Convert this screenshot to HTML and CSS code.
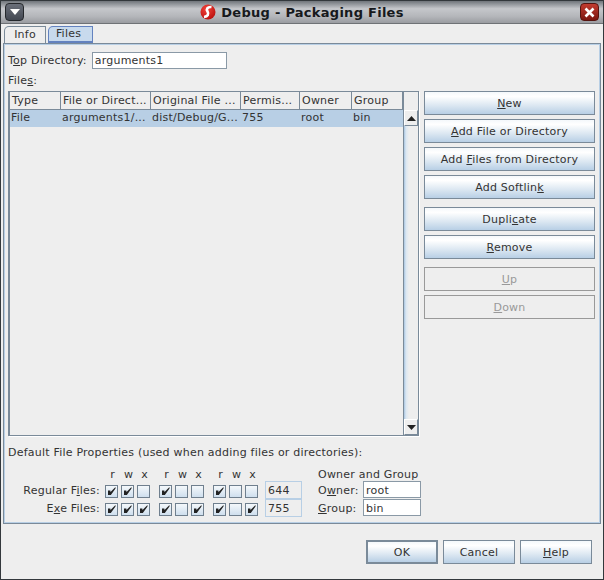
FILE: index.html
```html
<!DOCTYPE html>
<html>
	<head>
		<meta charset="utf-8">
		<title>Debug - Packaging Files</title>
		<link rel="stylesheet" href="styles.css">
	</head>
	<body>
		<div class="ventana">

			<div class="tituloBarra">
				<div class="botonMenu">
					<svg width="10" height="6" viewBox="0 0 10 6"><path d="M0 0H10L5 6Z" fill="#fff"/></svg>
				</div>
				<div class="titulo">
					<svg class="logo" width="16" height="16" viewBox="0 0 16 16">
						<defs>
							<radialGradient id="brilloLogo" cx="40%" cy="30%" r="75%">
								<stop offset="0" stop-color="#f4443c"/>
								<stop offset="1" stop-color="#b80f0c"/>
							</radialGradient>
						</defs>
						<circle cx="8" cy="8" r="7.5" fill="url(#brilloLogo)"/>
						<path d="M11.5 3C7.5 2.5 6 5 7.5 7.5C9 10 8 12.5 4 13" stroke="#fff" stroke-width="2.6" fill="none"/>
					</svg>
					<span>Debug - Packaging Files</span>
				</div>
				<div class="botonCerrar">
					<svg width="11" height="11" viewBox="0 0 11 11"><path d="M1.5 1.5L9.5 9.5M9.5 1.5L1.5 9.5" stroke="#fff" stroke-width="2.6"/></svg>
				</div>
			</div>

			<div class="cuerpo">
				<div class="tabs">
					<div class="tab">Info</div>
					<div class="tab tabActiva">Files</div>
				</div>

				<div class="panel">
					<div class="filaDirectorio">
						<label>T<u>o</u>p Directory:</label>
						<div class="campo campoDirectorio">arguments1</div>
					</div>
					<div class="etiquetaFiles">File<u>s</u>:</div>

					<div class="zonaTabla">
						<div class="tabla">
							<div class="tablaContenido">
								<div class="filaTabla cabecera">
									<div class="celda colTipo">Type</div>
									<div class="celda colArchivo">File or Direct...</div>
									<div class="celda colOriginal">Original File ...</div>
									<div class="celda colPermisos">Permis...</div>
									<div class="celda colOwner">Owner</div>
									<div class="celda colGrupo">Group</div>
								</div>
								<div class="filaTabla seleccionada">
									<div class="celda colTipo">File</div>
									<div class="celda colArchivo">arguments1/...</div>
									<div class="celda colOriginal">dist/Debug/G...</div>
									<div class="celda colPermisos">755</div>
									<div class="celda colOwner">root</div>
									<div class="celda colGrupo">bin</div>
								</div>
							</div>
							<div class="scroll">
								<div class="scrollBoton">
									<svg width="9" height="5" viewBox="0 0 9 5"><path d="M4.5 0L9 5H0Z" fill="#222"/></svg>
								</div>
								<div class="scrollPista"></div>
								<div class="scrollBoton">
									<svg width="9" height="5" viewBox="0 0 9 5"><path d="M0 0H9L4.5 5Z" fill="#222"/></svg>
								</div>
							</div>
						</div>

						<div class="botones">
							<div class="boton"><span><u>N</u>ew</span></div>
							<div class="boton"><span><u>A</u>dd File or Directory</span></div>
							<div class="boton"><span>Add <u>F</u>iles from Directory</span></div>
							<div class="boton"><span>Add Softlin<u>k</u></span></div>
							<div class="boton separado"><span>Dupli<u>c</u>ate</span></div>
							<div class="boton"><span><u>R</u>emove</span></div>
							<div class="boton separado apagado"><span><u>U</u>p</span></div>
							<div class="boton apagado"><span><u>D</u>own</span></div>
						</div>
					</div>

					<div class="tituloDefecto">Default File Properties (used when adding files or directories):</div>

					<div class="propiedades">
						<div class="permisos">
							<div class="filaPermisos letras">
								<div class="nombreFila"></div>
								<div class="grupoChecks"><b>r</b><b>w</b><b>x</b></div>
								<div class="grupoChecks"><b>r</b><b>w</b><b>x</b></div>
								<div class="grupoChecks"><b>r</b><b>w</b><b>x</b></div>
							</div>
							<div class="filaPermisos">
								<div class="nombreFila">Regular F<u>i</u>les:</div>
								<div class="grupoChecks"><i class="check si"></i><i class="check si"></i><i class="check"></i></div>
								<div class="grupoChecks"><i class="check si"></i><i class="check"></i><i class="check"></i></div>
								<div class="grupoChecks"><i class="check si"></i><i class="check"></i><i class="check"></i></div>
								<div class="campoOctal">644</div>
							</div>
							<div class="filaPermisos">
								<div class="nombreFila">E<u>x</u>e Files:</div>
								<div class="grupoChecks"><i class="check si"></i><i class="check si"></i><i class="check si"></i></div>
								<div class="grupoChecks"><i class="check si"></i><i class="check"></i><i class="check si"></i></div>
								<div class="grupoChecks"><i class="check si"></i><i class="check"></i><i class="check si"></i></div>
								<div class="campoOctal">755</div>
							</div>
						</div>

						<div class="dueno">
							<div class="duenoTitulo">Owner and Group</div>
							<div class="duenoFila">
								<label>O<u>w</u>ner:</label>
								<div class="campo campoDueno">root</div>
							</div>
							<div class="duenoFila">
								<label><u>G</u>roup:</label>
								<div class="campo campoDueno">bin</div>
							</div>
						</div>
					</div>
				</div>

				<div class="pie">
					<div class="boton botonPie porDefecto"><span>OK</span></div>
					<div class="boton botonPie"><span>Cancel</span></div>
					<div class="boton botonPie"><span><u>H</u>elp</span></div>
				</div>
			</div>
		</div>
	</body>
</html>
```
FILE: styles.css
```css
html, body {
	margin: 0;
	padding: 0;
}
body {
	width: 604px;
	height: 580px;
	overflow: hidden;
	font-family: "DejaVu Sans", sans-serif;
	font-size: 11px;
	letter-spacing: 0.22px;
	color: #333;
}
u {
	text-underline-offset: 1px;
}

.ventana {
	width: 604px;
	height: 580px;
	box-sizing: border-box;
	display: flex;
	flex-direction: column;
	border-left: 1px solid #33383c;
	border-right: 1px solid #33383c;
	border-bottom: 1px solid #33383c;
	background: #eeeeee;
}

/* barra de titulo */
.tituloBarra {
	height: 24px;
	box-sizing: border-box;
	flex-shrink: 0;
	display: flex;
	align-items: center;
	padding: 0 4px 0 4px;
	background: linear-gradient(#70757b, #c5c7cb 35%, #b4b6ba 70%, #9a9ca1);
	border-top: 1px solid #33383c;
	border-bottom: 1px solid #6f7276;
}
.botonMenu {
	width: 19px;
	height: 18px;
	box-sizing: border-box;
	display: flex;
	align-items: center;
	justify-content: center;
	background: linear-gradient(#6a6f79, #434852);
	border: 1px solid #25282c;
	border-radius: 4px;
}
.titulo {
	flex: 1;
	display: flex;
	align-items: center;
	justify-content: center;
	gap: 5px;
	font-size: 13px;
	font-weight: bold;
	letter-spacing: 0.27px;
	color: #17191c;
}
.botonCerrar {
	width: 19px;
	height: 18px;
	box-sizing: border-box;
	display: flex;
	align-items: center;
	justify-content: center;
	background: linear-gradient(#c23c30, #7c1610);
	border: 1px solid #561410;
	border-radius: 4px;
}

.cuerpo {
	flex: 1;
	display: flex;
	flex-direction: column;
	padding: 2px 2px 0 2px;
}

/* pestanas */
.tabs {
	display: flex;
	height: 17px;
	padding-left: 1px;
	gap: 2px;
}
.tab {
	width: 42px;
	height: 17px;
	box-sizing: border-box;
	text-align: center;
	line-height: 15px;
	background: #eeeeee;
	border: 1px solid #7a8a99;
	border-bottom: 0;
	border-top-left-radius: 5px;
}
.tabActiva {
	width: 45px;
	padding-right: 4px;
	background: #c8daed;
	border: 1px solid #6382bf;
	border-bottom: 2px solid #6382bf;
	color: #333;
	line-height: 14px;
}

.panel {
	height: 481px;
	box-sizing: border-box;
	border: 1px solid #7a8a99;
	box-shadow: inset 0 0 0 1px #b8cfe5;
	padding: 8px 5px 0 4px;
}

.filaDirectorio {
	display: flex;
	align-items: center;
	height: 17px;
	gap: 5px;
}
.campo {
	box-sizing: border-box;
	background: #fff;
	border: 1px solid #8a99a6;
	padding-left: 2px;
	line-height: 15px;
}
.campoDirectorio {
	width: 135px;
	height: 17px;
}
.etiquetaFiles {
	margin-top: 5px;
	height: 17px;
	line-height: 13px;
}

.zonaTabla {
	display: flex;
	gap: 5px;
	height: 345px;
}

/* tabla */
.tabla {
	width: 411px;
	height: 345px;
	box-sizing: border-box;
	display: flex;
	border: 1px solid #7a8a99;
	border-left: 2px solid #7a8a99;
	box-shadow: 1px 1px 0 #fff;
	background: #eeeeee;
}
.tablaContenido {
	flex: 1;
}
.filaTabla {
	display: flex;
	height: 17px;
}
.celda {
	box-sizing: border-box;
	padding-left: 2px;
	line-height: 16px;
	white-space: nowrap;
	overflow: hidden;
}
.cabecera {
	height: 18px;
	border-bottom: 1px solid #7a8a99;
	box-sizing: border-box;
}
.cabecera .celda {
	border-right: 1px solid #7a8a99;
	line-height: 18px;
}
.seleccionada {
	background: #b8cfe5;
}
.seleccionada .celda {
	padding-left: 1px;
}
.colTipo { width: 51px; }
.colArchivo { width: 90px; }
.colOriginal { width: 90px; }
.colPermisos { width: 59px; }
.colOwner { width: 52px; }
.colGrupo { width: 51px; }

.scroll {
	width: 16px;
	display: flex;
	flex-direction: column;
	box-sizing: border-box;
	border-left: 1px solid #7a8a99;
	padding-top: 18px;
}
.scrollBoton {
	height: 16px;
	flex-shrink: 0;
	display: flex;
	align-items: center;
	justify-content: center;
	background: #eeeeee;
	border: 1px solid #fff;
	border-right-color: #7a8a99;
	border-bottom-color: #7a8a99;
	box-sizing: border-box;
}
.scrollPista {
	flex: 1;
	background: linear-gradient(90deg, #a9c5e0 0, #dbe7f2 2px, #eeeeee 5px);
}

/* botones */
.botones {
	width: 171px;
	display: flex;
	flex-direction: column;
	gap: 4px;
}
.boton {
	height: 24px;
	box-sizing: border-box;
	display: flex;
	align-items: center;
	justify-content: center;
	border: 1px solid #7a8a99;
	background: linear-gradient(#f4f8fb, #ffffff 20%, #dde8f2 60%, #b8cfe5);
}
.separado {
	margin-top: 4px;
}
.apagado {
	background: #eeeeee;
	border-color: #999999;
	color: #999999;
}

.tituloDefecto {
	margin-top: 9px;
	height: 16px;
	line-height: 16px;
}

/* permisos */
.propiedades {
	display: flex;
	margin-top: 4px;
}
.permisos {
	width: 306px;
	margin-top: 2px;
}
.filaPermisos {
	display: flex;
	align-items: center;
	height: 18px;
}
.letras {
	height: 15px;
}
.nombreFila {
	width: 97px;
	padding-right: 5px;
	padding-bottom: 1px;
	box-sizing: border-box;
	text-align: right;
}
.grupoChecks {
	display: flex;
	gap: 3px;
	margin-right: 9px;
}
.grupoChecks b {
	width: 13px;
	padding-left: 2px;
	box-sizing: border-box;
	text-align: center;
	font-weight: normal;
}
.check {
	width: 13px;
	height: 13px;
	box-sizing: border-box;
	display: flex;
	align-items: center;
	justify-content: center;
	border: 1px solid #6f7f8e;
	background: linear-gradient(#f4f8fb, #cfdfee);
	font-style: normal;
}
.check.si::after {
	content: "";
	width: 8px;
	height: 8px;
	background: #222;
	clip-path: polygon(0 45%, 35% 45%, 38% 62%, 100% 0, 100% 18%, 42% 100%, 0 100%);
}
.campoOctal {
	width: 37px;
	height: 18px;
	box-sizing: border-box;
	margin-left: -2px;
	margin-top: -1px;
	align-self: flex-start;
	padding-left: 2px;
	line-height: 18px;
	border: 1px solid #b8cfe5;
}

.dueno {
	margin-left: 4px;
	margin-top: 1px;
}
.duenoTitulo {
	height: 15px;
	line-height: 17px;
}
.duenoFila {
	display: flex;
	align-items: flex-start;
	height: 18px;
}
.duenoFila label {
	width: 45px;
	line-height: 19px;
}
.campoDueno {
	width: 58px;
	height: 17px;
	line-height: 17px;
}

/* pie */
.pie {
	display: flex;
	justify-content: flex-end;
	gap: 5px;
	padding: 16px 9px 0 0;
}
.botonPie {
	width: 72px;
	height: 24px;
}
.porDefecto {
	border-width: 2px;
}
```
